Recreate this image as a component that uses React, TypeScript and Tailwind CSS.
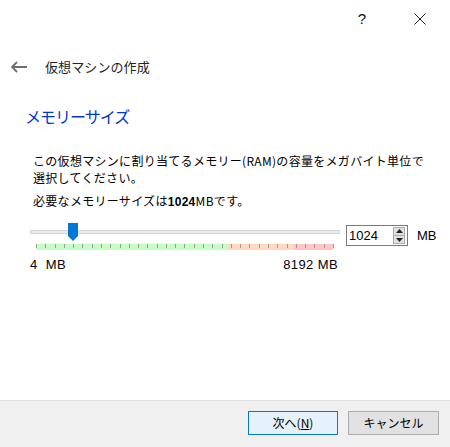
import React from 'react'

const jp = { fontFamily: '"Noto Sans CJK JP", "Liberation Sans", sans-serif' }
const lat = { fontFamily: '"Liberation Sans", sans-serif' }

function Ticks() {
  // 目盛り（32本）
  const ticks = Array.from({ length: 33 }, (_, i) => i)
  return (
    <div className="relative h-[6px] w-[297px] flex">
      <div className="h-full w-[191px] bg-[#c4fec4]" />
      <div className="h-full w-[67px] bg-[#ffd8c2]" />
      <div className="h-full w-[39px] bg-[#ffc4c4]" />
      {ticks.map((i) => (
        <div
          key={i}
          className="absolute top-0 h-[4px] w-px bg-[#9a9a9a]"
          style={{ left: Math.round(i * 9.28) }}
        />
      ))}
    </div>
  )
}

export default function App() {
  return (
    <div className="w-[450px] h-[447px] flex flex-col bg-white text-black" style={jp}>
      {/* タイトルバー */}
      <div className="h-[38px] flex justify-end items-center pr-[24px] text-[#111]">
        <span className="text-[15px] mr-[48px]" style={lat}>?</span>
        <svg width="12" height="12" viewBox="0 0 12 12">
          <path d="M0.5 0.5 L11.5 11.5 M11.5 0.5 L0.5 11.5" stroke="#222" strokeWidth="1" />
        </svg>
      </div>

      {/* 戻る + タイトル */}
      <div className="h-[60px] flex items-center pl-[11px] pb-[2px]">
        <svg width="16" height="12" viewBox="0 0 16 12">
          <path d="M1 6 H16 M6 1 L1 6 L6 11" stroke="#6e6e6e" strokeWidth="1.8" fill="none" />
        </svg>
        <span className="ml-[18px] text-[13px] text-[#222] tracking-[0.1px]">仮想マシンの作成</span>
      </div>

      {/* 見出し */}
      <div className="pl-[25px] mt-[8px] text-[16px] leading-[20px] text-[#0037c8] tracking-[-1px]">メモリーサイズ</div>

      <div className="pl-[33px] mt-[26px] text-[12px] leading-[17px] tracking-[0.3px]">
        <p>この仮想マシンに割り当てるメモリー(RAM)の容量をメガバイト単位で</p>
        <p>選択してください。</p>
        <p className="mt-[6px]">
          必要なメモリーサイズは<b style={lat}>1024</b>MBです。
        </p>
      </div>

      {/* スライダー */}
      <div className="flex pl-[30px] mt-[12px]">
        <div className="flex flex-col w-[310px]">
          <div className="relative h-[18px] flex items-center">
            <div className="w-full h-[4px] bg-[#e7eaea] border border-[#d6d6d6]" />
            <svg className="absolute left-[38px] top-0" width="10" height="18" viewBox="0 0 10 18">
              <path d="M0 0 H10 V13 L5 18 L0 13 Z" fill="#0078d7" />
            </svg>
          </div>
          <div className="pl-[6px] mt-[3px]">
            <Ticks />
          </div>
          <div
            className="flex justify-between mt-[8px] pr-[2px] text-[13px] leading-[14px] tracking-[0.4px]"
            style={lat}
          >
            <span>4&nbsp; MB</span>
            <span>8192 MB</span>
          </div>
        </div>

        <div className="ml-[6px] mt-[2px] flex items-start">
          <div className="w-[62px] h-[21px] border border-[#7a7a7a] flex items-center justify-between pl-[2px] pr-[2px]">
            <span className="text-[13px]" style={lat}>1024</span>
            <div className="w-[12px] h-[17px] border border-[#adadad] bg-[#e1e1e1] flex flex-col items-center justify-center gap-[2px]">
              <svg width="7" height="4" viewBox="0 0 7 4"><path d="M0 4 L3.5 0 L7 4 Z" fill="#222" /></svg>
              <div className="w-full h-px bg-[#adadad]" />
              <svg width="7" height="4" viewBox="0 0 7 4"><path d="M0 0 L3.5 4 L7 0 Z" fill="#222" /></svg>
            </div>
          </div>
          <span className="ml-[9px] text-[13px] leading-[21px]" style={lat}>MB</span>
        </div>
      </div>

      <div className="flex-1" />

      {/* フッター */}
      <div className="h-[47px] bg-[#f0f0f0] border-t border-[#dfdfdf] flex justify-end items-start pt-[10px] pr-[11px] gap-[10px] text-[12px]">
        <button className="w-[90px] h-[24px] bg-[#e5f1fb] border border-[#0078d7] flex items-center justify-center">
          次へ(<span className="underline">N</span>)
        </button>
        <button className="w-[91px] h-[24px] bg-[#e1e1e1] border border-[#adadad] flex items-center justify-center">
          キャンセル
        </button>
      </div>
    </div>
  )
}
